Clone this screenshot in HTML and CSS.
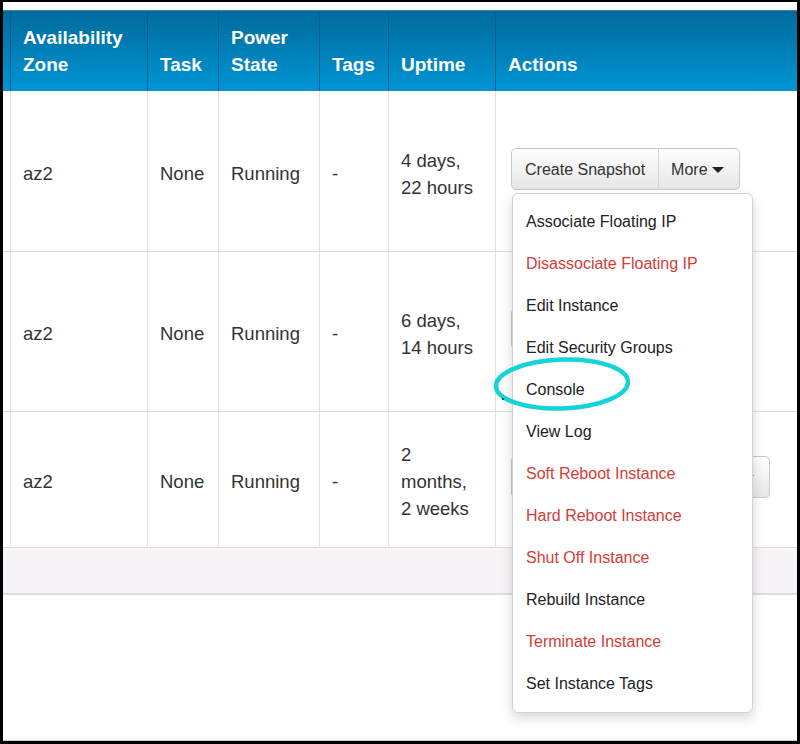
FILE: index.html
```html
<!DOCTYPE html>
<html>
<head>
<meta charset="utf-8">
<title>Instances</title>
<link rel="stylesheet" href="styles.css">
</head>
<body>
<div class="frame">
  <div class="screen">
    <div class="table">
      <div class="row head">
        <div class="cell edge"></div>
        <div class="cell">Availability Zone</div>
        <div class="cell">Task</div>
        <div class="cell">Power State</div>
        <div class="cell">Tags</div>
        <div class="cell">Uptime</div>
        <div class="cell">Actions</div>
      </div>

      <div class="row r1">
        <div class="cell edge"></div>
        <div class="cell">az2</div>
        <div class="cell">None</div>
        <div class="cell">Running</div>
        <div class="cell">-</div>
        <div class="cell">4 days,<br>22 hours</div>
        <div class="cell actions">
          <div class="btn-group">
            <span class="btn">Create Snapshot</span><span class="btn more">More <i class="caret"></i></span>
            <ul class="menu">
              <li>Associate Floating IP</li>
              <li class="danger">Disassociate Floating IP</li>
              <li>Edit Instance</li>
              <li>Edit Security Groups</li>
              <li>Console</li>
              <li>View Log</li>
              <li class="danger">Soft Reboot Instance</li>
              <li class="danger">Hard Reboot Instance</li>
              <li class="danger">Shut Off Instance</li>
              <li>Rebuild Instance</li>
              <li class="danger">Terminate Instance</li>
              <li>Set Instance Tags</li>
              <svg class="mark" width="141" height="58" viewBox="0 0 141 58"><ellipse cx="70" cy="28" rx="66" ry="24.5" fill="none" stroke="#16d2d9" stroke-width="4.5" transform="rotate(-2 70 28)"/><circle cx="11" cy="43" r="1" fill="#222"/></svg>
            </ul>
          </div>
        </div>
      </div>

      <div class="row r2">
        <div class="cell edge"></div>
        <div class="cell">az2</div>
        <div class="cell">None</div>
        <div class="cell">Running</div>
        <div class="cell">-</div>
        <div class="cell">6 days,<br>14 hours</div>
        <div class="cell actions">
          <div class="btn-group">
            <span class="btn">Create Snapshot</span><span class="btn more">More <i class="caret"></i></span>
          </div>
        </div>
      </div>

      <div class="row r3">
        <div class="cell edge"></div>
        <div class="cell">az2</div>
        <div class="cell">None</div>
        <div class="cell">Running</div>
        <div class="cell">-</div>
        <div class="cell">2<br>months,<br>2 weeks</div>
        <div class="cell actions">
          <div class="btn-group">
            <span class="btn wide">Create Snapshot</span><span class="btn more">More <i class="caret"></i></span>
          </div>
        </div>
      </div>

      <div class="foot"></div>
    </div>
  </div>
</div>
</body>
</html>
```
FILE: styles.css
```css
html, body {
  margin: 0;
  padding: 0;
  background: #000;
}
.frame {
  width: 800px;
  height: 744px;
  box-sizing: border-box;
  border-style: solid;
  border-color: #000;
  border-width: 2px 3px 3px 3px;
  background: #fff;
  display: flex;
  flex-direction: column;
  overflow: hidden;
}
.screen {
  flex: 1;
  background: #fff;
  padding-top: 8px;
  border-bottom: 1px solid #cfcfcf;
  font-family: "Liberation Sans", Arial, sans-serif;
  color: #333;
}
.table {
  display: flex;
  flex-direction: column;
}
.row {
  display: grid;
  grid-template-columns: 7px 137px 71px 101px 69px 107px 1fr;
  box-sizing: border-box;
}
.cell {
  box-sizing: border-box;
  border-left: 1px solid #e1e1e1;
  padding: 4px 12px 0 12px;
  display: flex;
  align-items: center;
  font-size: 18.5px;
  line-height: 27px;
}
.cell.edge {
  border-left: none;
  padding: 0;
}
.head {
  height: 81px;
  background: linear-gradient(#006a9b, #0095d5);
  border-top: 1px solid #2f86b3;
}
.head .cell {
  border-left-color: #005d8c;
  color: #fff;
  font-weight: bold;
  font-size: 19px;
  align-items: flex-end;
  padding: 0 12px 13px 12px;
}
.r1 { height: 161px; border-top: 1px solid #fff; border-bottom: 1px solid #dddddd; }
.r2 { height: 160px; border-bottom: 1px solid #dddddd; }
.r3 { height: 136px; border-bottom: 1px solid #dddddd; }
.foot {
  height: 47px;
  box-sizing: border-box;
  background: #f7f3f7;
  border-bottom: 2px solid #dcdcdc;
}
.cell.actions {
  padding: 0 12px 5px 15px;
}
.btn-group {
  position: relative;
  display: flex;
}
.btn {
  display: flex;
  align-items: center;
  height: 42px;
  box-sizing: border-box;
  padding: 0 13px 0 13px;
  font-size: 16px;
  color: #333;
  background: linear-gradient(#ffffff, #e6e6e6);
  border: 1px solid #c9c9c9;
  border-radius: 5px 0 0 5px;
  white-space: nowrap;
}
.btn.wide {
  padding: 0 28px 0 28px;
}
.btn.more {
  border-left: 1px solid #d4d4d4;
  border-radius: 0 5px 5px 0;
  margin-left: -1px;
  padding: 0 15px 0 12px;
}
.caret {
  display: inline-block;
  width: 0;
  height: 0;
  margin-left: 4px;
  margin-top: 1px;
  border-top: 6px solid #222;
  border-left: 6px solid transparent;
  border-right: 6px solid transparent;
}
.menu {
  position: absolute;
  z-index: 10;
  top: 45px;
  left: 1px;
  width: 241px;
  box-sizing: border-box;
  margin: 0;
  padding: 7px 0;
  list-style: none;
  background: #fff;
  border: 1px solid #d2d2d2;
  border-radius: 6px;
  box-shadow: 0 5px 12px rgba(0, 0, 0, 0.16);
}
.menu li {
  height: 42px;
  line-height: 42px;
  padding: 0 13px;
  font-size: 16px;
  color: #222;
  white-space: nowrap;
}
.menu li.danger {
  color: #d43c38;
}
.mark {
  position: absolute;
  left: -21px;
  top: 162px;
}
```
